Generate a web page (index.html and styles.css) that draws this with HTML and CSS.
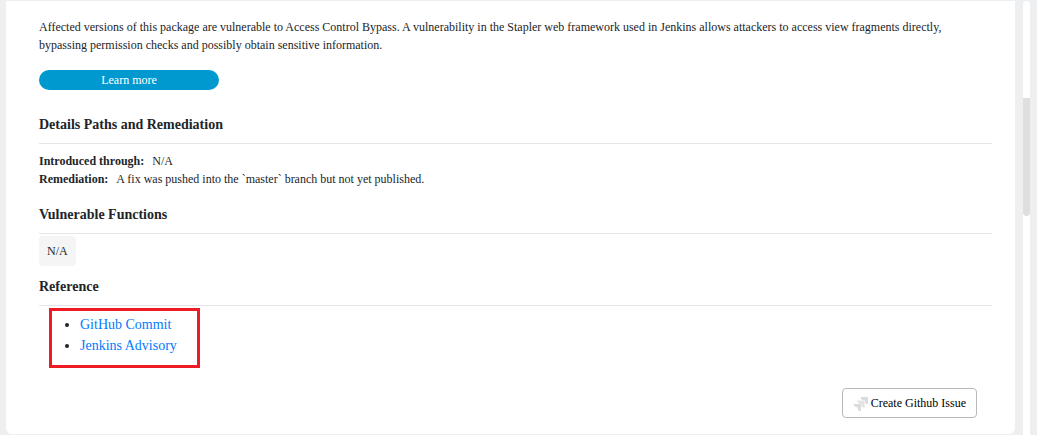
FILE: index.html
```html
<!DOCTYPE html>
<html lang="en">
<head>
<meta charset="utf-8">
<title>Vulnerability details</title>
<link rel="stylesheet" href="styles.css">
</head>
<body>
<div class="page">
  <main class="card">
    <p class="summary">Affected versions of this package are vulnerable to Access Control Bypass. A vulnerability in the Stapler web framework used in Jenkins allows attackers to access view fragments directly, bypassing permission checks and possibly obtain sensitive information.</p>
    <button class="learn" type="button">Learn more</button>
    <section>
      <h2 class="title">Details Paths and Remediation</h2>
      <dl class="facts">
        <div class="fact"><dt>Introduced through:</dt><dd>N/A</dd></div>
        <div class="fact"><dt>Remediation:</dt><dd>A fix was pushed into the `master` branch but not yet published.</dd></div>
      </dl>
    </section>
    <section>
      <h2 class="title">Vulnerable Functions</h2>
      <span class="chip">N/A</span>
    </section>
    <section>
      <h2 class="title">Reference</h2>
      <ul class="links">
        <li><a href="#commit">GitHub Commit</a></li>
        <li><a href="#advisory">Jenkins Advisory</a></li>
      </ul>
    </section>
    <footer class="actions">
      <button class="create" type="button">
        <svg class="icon" viewBox="0 0 16 16" aria-hidden="true">
          <path fill="#dcdcdc" d="M7.500 1H15v7.500c-2-.2-3.200-1.400-3.200-3.200V4.200h-1.100C8.900 4.200 7.700 3 7.500 1z"/>
          <path fill="#e4e4e4" d="M4 4.500h7.500V12c-2-.2-3.200-1.400-3.200-3.200V7.700H7.200C5.400 7.700 4.200 6.500 4 4.500z"/>
          <path fill="#dcdcdc" d="M.5 8H8v7.500c-2-.2-3.200-1.400-3.200-3.200v-1.100H3.700C1.900 11.200.7 10 .5 8z"/>
        </svg>
        Create Github Issue
      </button>
    </footer>
  </main>
  <div class="track"><div class="thumb"></div></div>
</div>
</body>
</html>
```
FILE: styles.css
```css
* { box-sizing: border-box; }
body {
  margin: 0;
  background: #eeeff1;
  color: #212529;
  font: 12px/18px "Liberation Serif", "Times New Roman", serif;
}
.page {
  display: flex;
  gap: 8px;
  min-height: 100vh;
  padding: 1px 7px 0 6px;
}
.card {
  flex: 1;
  margin-bottom: 1px;
  padding: 17px 23px 16px 33px;
  background: #fff;
  border-radius: 0 0 6px 6px;
}
.summary { margin: 0 0 16px; }
button { font: inherit; cursor: pointer; }
.learn {
  display: block;
  width: 180px;
  height: 20px;
  margin-bottom: 24px;
  padding: 0;
  border: 0;
  border-radius: 10px;
  background: #0099cf;
  color: #fff;
}
.title {
  margin: 0;
  padding-bottom: 8px;
  border-bottom: 1px solid #e4e5e6;
  font-size: 14px;
  line-height: 21px;
}
.facts { margin: 8px 0 16px; }
.fact { display: flex; gap: 8px; }
dt { font-weight: bold; }
dd { margin: 0; }
.chip {
  display: block;
  width: fit-content;
  margin: 2px 0 10px;
  padding: 6px 8px;
  border-radius: 4px;
  background: #f5f5f5;
}
.links {
  width: 151px;
  margin: 2px 0 20px 10px;
  padding: 3px 0 9px 28px;
  border: 3px solid #ed1c24;
  font-size: 14px;
  line-height: 21px;
}
.links a { color: #007bff; text-decoration: none; }
.actions { display: flex; justify-content: flex-end; padding-right: 15px; }
.create {
  display: flex;
  align-items: center;
  gap: 2px;
  height: 30px;
  padding: 0 10px;
  border: 1px solid #b9b9b9;
  border-radius: 4px;
  background: #fff;
  color: #000;
}
.icon { width: 16px; height: 16px; margin-top: 2px; }
.track {
  width: 7px;
  border-radius: 4px 4px 0 0;
  background: #fff;
}
.thumb {
  height: 118px;
  margin-top: 97px;
  border-radius: 0 0 4px 4px;
  background: #dfdfdf;
}
```
